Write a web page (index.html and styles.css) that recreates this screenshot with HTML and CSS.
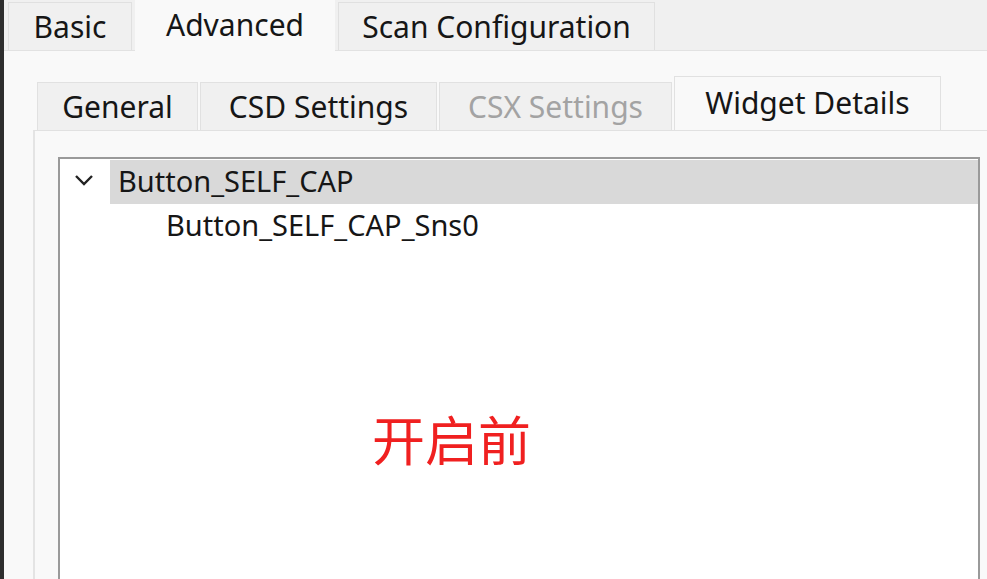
FILE: index.html
```html
<!DOCTYPE html>
<html lang="zh">
<head>
  <meta charset="UTF-8" />
  <title>Widget Details</title>
  <link rel="stylesheet" href="styles.css">
</head>
<body>
  <div class="window">
    <div class="tab-bar">
      <div class="tab tab-basic">Basic</div>
      <div class="tab tab-advanced active">Advanced</div>
      <div class="tab tab-scan">Scan Configuration</div>
    </div>

    <div class="outer-panel">
      <div class="sub-tab-bar">
        <div class="sub-tab tab-general">General</div>
        <div class="sub-tab tab-csd">CSD Settings</div>
        <div class="sub-tab tab-csx disabled">CSX Settings</div>
        <div class="sub-tab tab-widget active">Widget Details</div>
      </div>

      <div class="inner-panel">
        <div class="tree">
          <div class="tree-row selected">
            <span class="chevron">
              <svg width="20" height="12" viewBox="0 0 20 12">
                <path d="M2 2 L10 10 L18 2" fill="none" stroke="#222" stroke-width="2.4" />
              </svg>
            </span>
            <span class="node-label">Button_SELF_CAP</span>
          </div>
          <div class="tree-row child">
            <span class="node-label">Button_SELF_CAP_Sns0</span>
          </div>
          <div class="note">开启前</div>
        </div>
      </div>
    </div>
  </div>
</body>
</html>
```

FILE: styles.css
```css
* {
  margin: 0;
  padding: 0;
  box-sizing: border-box;
}

body {
  width: 987px;
  height: 579px;
  overflow: hidden;
  background: #f9f9f9;
  font-family: 'Noto Sans', 'Noto Sans CJK SC', sans-serif;
  color: #161616;
}

.window {
  height: 579px;
  border-left: 4px solid #2e2e2e;
  display: flex;
  flex-direction: column;
}

/* top level tabs */
.tab-bar {
  height: 51px;
  display: flex;
  align-items: flex-end;
  gap: 3px;
  padding-left: 4px;
  background: #f0f0f0;
  border-bottom: 1px solid #e2e2e2;
}

.tab {
  height: 48px;
  display: flex;
  align-items: center;
  justify-content: center;
  font-size: 30px;
  background: #f0f0f0;
  border: 1px solid #e0e0e0;
  border-bottom: none;
}

.tab-basic { width: 124px; }
.tab-advanced { width: 200px; }
.tab-scan { width: 317px; }

.tab.active {
  height: 51px;
  margin-bottom: -1px;
  padding-bottom: 4px;
  background: #f9f9f9;
  border-color: #f9f9f9;
}

.outer-panel {
  flex: 1;
  display: flex;
  flex-direction: column;
  padding: 25px 0 0 29px;
}

/* second level tabs */
.sub-tab-bar {
  height: 54px;
  display: flex;
  align-items: flex-end;
  gap: 2px;
  padding-left: 4px;
}

.sub-tab {
  height: 48px;
  display: flex;
  align-items: center;
  justify-content: center;
  font-size: 30px;
  background: #f0f0f0;
  border: 1px solid #e1e1e1;
  border-bottom: none;
}

.tab-general { width: 161px; }
.tab-csd { width: 237px; }
.tab-csx { width: 233px; }
.tab-widget { width: 267px; }

.sub-tab.disabled {
  color: #a3a3a3;
}

.sub-tab.active {
  height: 55px;
  margin-bottom: -1px;
  padding-bottom: 4px;
  background: #f9f9f9;
  border-color: #e1e1e1;
}

.inner-panel {
  flex: 1;
  border-left: 2px solid #e4e4e4;
  border-top: 1px solid #e1e1e1;
  padding: 26px 7px 0 23px;
  background: #f9f9f9;
}

.tree {
  height: 100%;
  background: #fff;
  border: 2px solid #9a9a9a;
  border-bottom: none;
  padding-top: 1px;
}

.tree-row {
  height: 44px;
  display: flex;
  align-items: center;
  padding-bottom: 4px;
  font-size: 29px;
}

.tree-row.selected {
  margin-left: 50px;
  background: #d9d9d9;
  position: relative;
}

.chevron {
  position: absolute;
  left: -36px;
  top: 14px;
  display: flex;
}

.tree-row.selected .node-label {
  margin-left: 8px;
}

.tree-row.child {
  padding-left: 106px;
}

.note {
  margin: 164px 0 0 312px;
  font-size: 53px;
  line-height: 1;
  color: #f02020;
  font-family: 'Noto Sans CJK SC', sans-serif;
}
```
